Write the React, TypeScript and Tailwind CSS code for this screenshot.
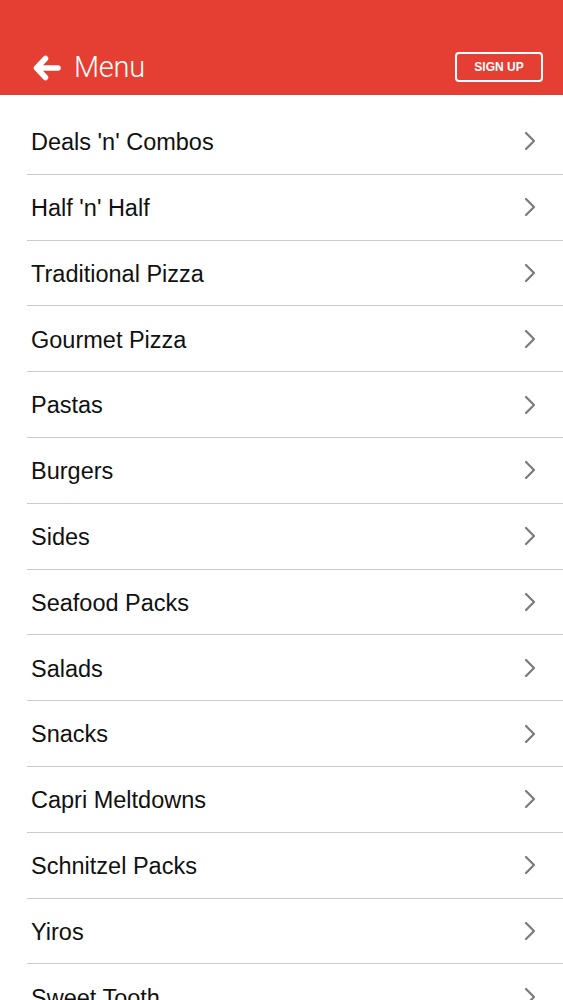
const ITEMS = [
  "Deals 'n' Combos",
  "Half 'n' Half",
  'Traditional Pizza',
  'Gourmet Pizza',
  'Pastas',
  'Burgers',
  'Sides',
  'Seafood Packs',
  'Salads',
  'Snacks',
  'Capri Meltdowns',
  'Schnitzel Packs',
  'Yiros',
  'Sweet Tooth',
]

function BackArrow() {
  return (
    <svg width="28" height="26" viewBox="0 0 28 26" fill="none">
      <path
        d="M12.5 3.5 L3.5 13 L12.5 22.5 M5 13 H25"
        stroke="white"
        strokeWidth="5.5"
        strokeLinecap="round"
        strokeLinejoin="round"
      />
    </svg>
  )
}

function Chevron() {
  return (
    <svg width="12" height="20" viewBox="0 0 12 20" fill="none" className="ml-auto">
      <path d="M2 2 L10 10 L2 18" stroke="#7a7a7a" strokeWidth="2.2" strokeLinecap="round" strokeLinejoin="round" />
    </svg>
  )
}

export default function App() {
  return (
    <div className="min-h-screen bg-white font-['Liberation_Sans',Arial,sans-serif]">
      {/* Header */}
      <header className="h-[95px] bg-[#e53e33] flex items-end pb-[13px] pl-[33px] pr-[20px]">
        <div className="flex items-center gap-[13px]">
          <BackArrow />
          <span className="text-white text-[29px] leading-none font-light font-['Roboto',sans-serif] tracking-[-0.3px]">
            Menu
          </span>
        </div>
        <button className="ml-auto w-[88px] h-[30px] border-2 border-white rounded-[4px] text-white text-[12px] font-bold leading-none">
          SIGN UP
        </button>
      </header>

      {/* List */}
      <ul className="pt-[14px] pl-[27px]">
        {ITEMS.map(item => (
          <li
            key={item}
            className="h-[65.8px] border-b border-[#cbcbcb] flex items-center pl-[4px] pr-[27px]"
          >
            <span className="text-[23.5px] text-[#111] leading-none pt-[3px]">{item}</span>
            <Chevron />
          </li>
        ))}
      </ul>
    </div>
  )
}
